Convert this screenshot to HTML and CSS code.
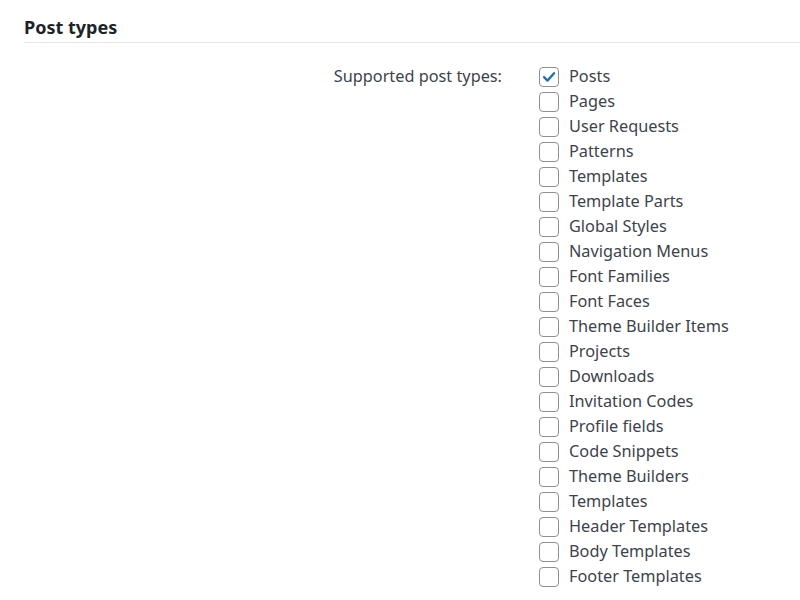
FILE: index.html
```html
<!DOCTYPE html>
<html>
<head>
<meta charset="utf-8">
<link rel="stylesheet" href="styles.css">
</head>
<body>
<div class="page">
  <h2 class="section-title">Post types</h2>
  <div class="field">
    <div class="field-label">Supported post types:</div>
    <ul class="options">
      <li class="option"><span class="box checked"><svg viewBox="0 0 20 20" width="20" height="20"><path d="M4.5 10.2 L8.3 14 L15.6 5.8" fill="none" stroke="#2271b1" stroke-width="2.6" stroke-linecap="round" stroke-linejoin="round"/></svg></span>Posts</li>
      <li class="option"><span class="box"></span>Pages</li>
      <li class="option"><span class="box"></span>User Requests</li>
      <li class="option"><span class="box"></span>Patterns</li>
      <li class="option"><span class="box"></span>Templates</li>
      <li class="option"><span class="box"></span>Template Parts</li>
      <li class="option"><span class="box"></span>Global Styles</li>
      <li class="option"><span class="box"></span>Navigation Menus</li>
      <li class="option"><span class="box"></span>Font Families</li>
      <li class="option"><span class="box"></span>Font Faces</li>
      <li class="option"><span class="box"></span>Theme Builder Items</li>
      <li class="option"><span class="box"></span>Projects</li>
      <li class="option"><span class="box"></span>Downloads</li>
      <li class="option"><span class="box"></span>Invitation Codes</li>
      <li class="option"><span class="box"></span>Profile fields</li>
      <li class="option"><span class="box"></span>Code Snippets</li>
      <li class="option"><span class="box"></span>Theme Builders</li>
      <li class="option"><span class="box"></span>Templates</li>
      <li class="option"><span class="box"></span>Header Templates</li>
      <li class="option"><span class="box"></span>Body Templates</li>
      <li class="option"><span class="box"></span>Footer Templates</li>
    </ul>
  </div>
</div>
</body>
</html>
```
FILE: styles.css
```css
html, body {
  margin: 0;
  padding: 0;
  background: #ffffff;
}
body {
  font-family: "Noto Sans", "Open Sans", sans-serif;
  color: #3c434a;
  font-size: 16.3px;
}
.page {
  padding-left: 24px;
}
.section-title {
  margin: 0;
  padding-top: 14px;
  height: 28px;
  font-size: 18px;
  font-weight: 700;
  line-height: 26px;
  color: #1d2327;
  border-bottom: 1px solid #e8e8e8;
}
.field {
  display: grid;
  grid-template-columns: 478px auto;
  column-gap: 37px;
  padding-top: 21px;
}
.field-label {
  text-align: right;
  line-height: 25px;
}
.options {
  list-style: none;
  margin: 0;
  padding: 0;
}
.option {
  display: flex;
  align-items: center;
  gap: 10px;
  height: 25px;
  line-height: 25px;
}
.box {
  width: 18px;
  height: 18px;
  border: 1px solid #8c8f94;
  border-radius: 4px;
  box-sizing: content-box;
  display: flex;
  align-items: center;
  justify-content: center;
  flex: none;
}
.box svg {
  display: block;
}
```
